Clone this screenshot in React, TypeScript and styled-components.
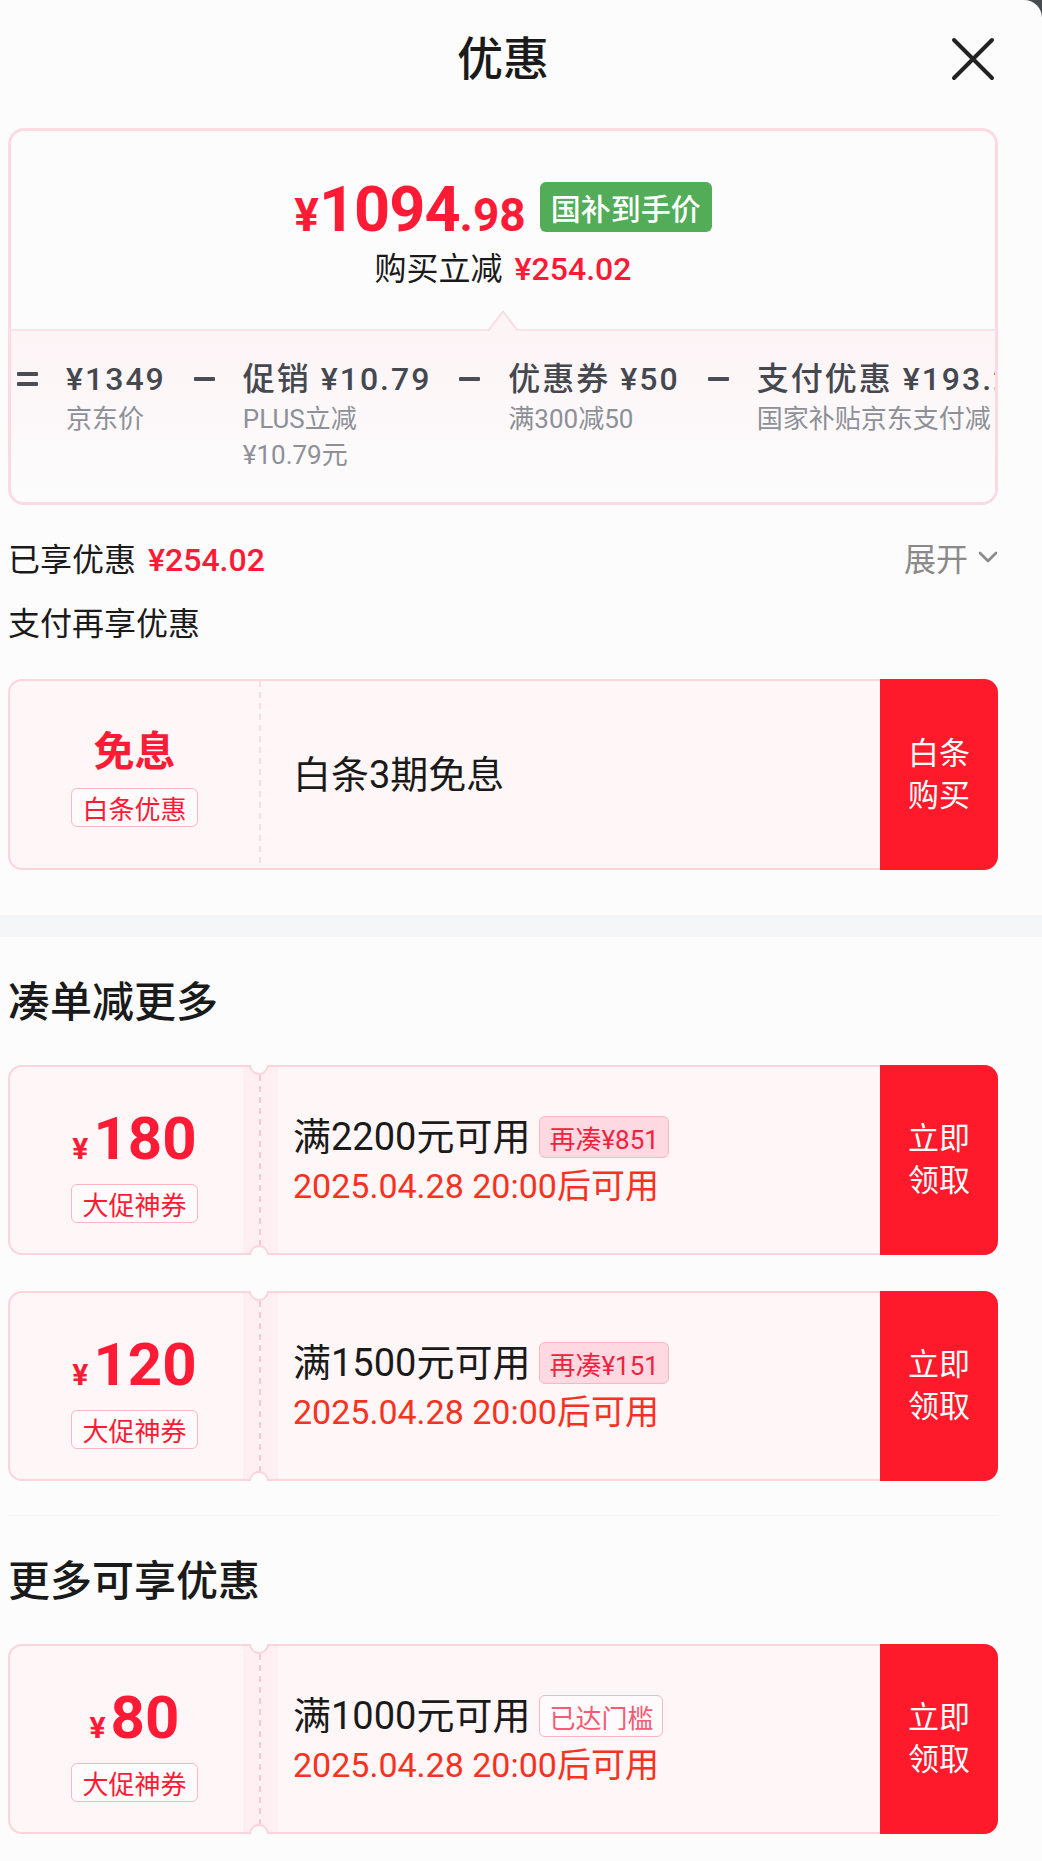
import styled, { createGlobalStyle } from "styled-components";

const GlobalStyle = createGlobalStyle`
  html, body {
    margin: 0;
    padding: 0;
    background: #474c51;
  }
  body {
    font-family: Roboto, "Noto Sans CJK SC", sans-serif;
    color: #1a1a1a;
  }
  * {
    box-sizing: border-box;
  }
`;

const RED = "#ff1a35";

const Sheet = styled.div`
  width: 1042px;
  height: 1861px;
  overflow: hidden;
  background: #fcfcfc;
  border-top-right-radius: 18px;
`;

const Section = styled.div`
  padding: 0 44px 0 8px;
`;

const Header = styled.div`
  height: 118px;
  display: grid;
  grid-template-columns: 1fr auto 1fr;
  align-items: center;
`;

const Title = styled.h1`
  grid-column: 2;
  margin: 0;
  font-size: 46px;
  font-weight: 500;
  line-height: 60px;
`;

const CloseButton = styled.button`
  justify-self: end;
  width: 44px;
  height: 44px;
  margin-right: 3px;
  padding: 0;
  border: 0;
  background: none;
  display: flex;
`;

/* ---------- summary card ---------- */

const SummaryCard = styled.div`
  margin-top: 10px;
  border: 3px solid #fdd9e3;
  border-radius: 16px;
  overflow: hidden;
`;

const SummaryTop = styled.div`
  height: 198px;
  padding-top: 51px;
  display: flex;
  flex-direction: column;
  align-items: center;
`;

const PriceRow = styled.div`
  height: 50px;
  display: flex;
  align-items: flex-end;
`;

const FinalPrice = styled.div`
  display: flex;
  align-items: baseline;
  color: ${RED};
  font-family: Roboto, sans-serif;
  font-weight: 700;
`;

const PricePart = styled.span<{ $big?: boolean }>`
  font-size: ${(p) => (p.$big ? "63px" : "46px")};
  line-height: 0.68;
  letter-spacing: ${(p) => (p.$big ? "-1px" : "0")};
`;

const GreenBadge = styled.div`
  margin-left: 14px;
  height: 50px;
  padding: 0 11px;
  border-radius: 6px;
  background: #52ac58;
  color: #fff;
  font-size: 30px;
  font-weight: 500;
  display: flex;
  align-items: center;
`;

const SaveLine = styled.div`
  margin-top: 17px;
  font-size: 32px;
  line-height: 40px;
`;

const RedAmount = styled.span`
  margin-left: 12px;
  color: ${RED};
  font-weight: 500;
`;

const SummaryBottom = styled.div`
  position: relative;
  border-top: 2px solid #fde4ea;
  background: linear-gradient(180deg, #fdf4f6 0%, #fcfcfc 100%);
  padding: 26px 0 29px 6px;
`;

const Pointer = styled.svg`
  position: absolute;
  top: -21px;
  left: 50%;
  transform: translateX(-50%);
`;

const Breakdown = styled.div`
  display: flex;
  gap: 28px;
  align-items: flex-start;
`;

const Operator = styled.div`
  flex: none;
  height: 44px;
  display: flex;
  flex-direction: column;
  justify-content: center;
  gap: 6px;
`;

const OpBar = styled.span`
  width: 21px;
  height: 4px;
  border-radius: 1px;
  background: #4a4d55;
`;

const BreakItem = styled.div`
  flex: none;
  display: flex;
  flex-direction: column;
`;

const BreakMain = styled.div`
  font-size: 32px;
  line-height: 44px;
  font-weight: 500;
  letter-spacing: 2px;
  color: #45484f;
  white-space: nowrap;
`;

const BreakSub = styled.div`
  width: 0;
  min-width: 100%;
  font-size: 26px;
  line-height: 36px;
  color: #8d9097;
`;

/* ---------- rows ---------- */

const AppliedRow = styled.div`
  margin-top: 28px;
  height: 48px;
  display: flex;
  align-items: center;
  justify-content: space-between;
  font-size: 32px;
`;

const Expand = styled.div`
  display: flex;
  align-items: center;
  gap: 10px;
  color: #8a8a8a;
`;

const PayTitle = styled.div`
  margin-top: 19px;
  font-size: 32px;
  line-height: 48px;
`;

const Band = styled.div`
  margin-top: 45px;
  height: 22px;
  background: #f5f6f8;
`;

const Heading = styled.h2<{ $top: number }>`
  margin: ${(p) => p.$top}px 0 0;
  font-size: 42px;
  font-weight: 500;
  line-height: 60px;
`;

const TicketList = styled.div`
  margin-top: 32px;
  display: flex;
  flex-direction: column;
  gap: 36px;
`;

const FaintLine = styled.div`
  margin-top: 34px;
  height: 1px;
  background: #f5f6f9;
`;

/* ---------- tickets ---------- */

const Ticket = styled.div<{ $top?: number }>`
  position: relative;
  margin-top: ${(p) => p.$top ?? 0}px;
  height: ${(p) => (p.$top ? 191 : 190)}px;
  display: flex;
  border: 2px solid #fdd3dc;
  border-radius: 14px;
  background: #fff6f7;
`;

const TicketLeft = styled.div<{ $notched?: boolean }>`
  flex: none;
  width: 249px;
  display: flex;
  flex-direction: column;
  align-items: center;
  justify-content: center;
  padding-top: ${(p) => (p.$notched ? 11 : 4)}px;
  border-radius: 12px 0 0 12px;
  background: ${(p) =>
    p.$notched
      ? "linear-gradient(90deg, transparent calc(100% - 16px), #fdeff2 calc(100% - 16px))"
      : "transparent"};
`;

const Dashes = styled.div<{ $notched?: boolean }>`
  flex: none;
  width: 2px;
  margin: ${(p) => (p.$notched ? "8px 0" : "0")};
  background: repeating-linear-gradient(
    180deg,
    ${(p) => (p.$notched ? "#fac6d2" : "#fcdce3")} 0 6px,
    transparent 6px 11px
  );
`;

const TicketMiddle = styled.div<{ $notched?: boolean }>`
  flex: 1;
  min-width: 0;
  padding-left: 32px;
  display: flex;
  flex-direction: column;
  justify-content: center;
  background: ${(p) =>
    p.$notched
      ? "linear-gradient(90deg, #fdeff2 17px, transparent 17px)"
      : "transparent"};
`;

const ActionButton = styled.button`
  flex: none;
  width: 118px;
  margin: -2px -2px -2px 0;
  border: 0;
  border-radius: 0 14px 14px 0;
  background: #ff1a2b;
  color: #fff;
  font-family: inherit;
  font-size: 31px;
  line-height: 42px;
  display: flex;
  flex-direction: column;
  align-items: center;
  justify-content: center;
`;

const Notch = styled.span<{ $side: "top" | "bottom" }>`
  position: absolute;
  left: 239px;
  ${(p) => (p.$side === "top" ? "top: -12px;" : "bottom: -12px;")}
  width: 20px;
  height: 20px;
  border-radius: 50%;
  background: #fcfcfc;
  border: 2px solid transparent;
  ${(p) =>
    p.$side === "top"
      ? "border-bottom-color: #fdd3dc; border-left-color: #fdd3dc; transform: rotate(-45deg);"
      : "border-top-color: #fdd3dc; border-left-color: #fdd3dc; transform: rotate(45deg);"}
`;

const BigWord = styled.div`
  color: ${RED};
  font-size: 41px;
  font-weight: 700;
  line-height: 50px;
`;

const Amount = styled.div`
  display: flex;
  align-items: baseline;
  color: ${RED};
  font-family: Roboto, sans-serif;
  font-weight: 700;
`;

const AmountYen = styled.span`
  margin-right: 5px;
  font-size: 30px;
`;

const AmountNum = styled.span`
  font-size: 60px;
  line-height: 60px;
`;

const LeftTag = styled.div<{ $gap: number }>`
  margin-top: ${(p) => p.$gap}px;
  height: 39px;
  padding: 0 10px;
  border: 1px solid #fcb7c4;
  border-radius: 6px;
  background: #fffafb;
  color: ${RED};
  font-size: 26px;
  display: flex;
  align-items: center;
`;

const PlainText = styled.div`
  font-size: 38px;
  line-height: 48px;
`;

const CondRow = styled.div`
  display: flex;
  align-items: center;
  gap: 9px;
  height: 52px;
`;

const Cond = styled.span`
  font-size: 38px;
  line-height: 52px;
`;

const CondTag = styled.span<{ $kind: "fill" | "outline" }>`
  height: 42px;
  padding: 0 9px;
  border: 1px solid #fbb5c3;
  border-radius: 6px;
  background: ${(p) => (p.$kind === "fill" ? "#ffd9e1" : "#fffafb")};
  color: ${(p) => (p.$kind === "fill" ? "#f0233e" : "#f45c74")};
  font-size: 26px;
  display: flex;
  align-items: center;
`;

const DateLine = styled.div`
  font-size: 34px;
  line-height: 46px;
  color: #f7321f;
`;

type Coupon = {
  amount: string;
  cond: string;
  tag: string;
  kind: "fill" | "outline";
  date: string;
};

const breakdown = [
  { main: "¥1349", sub: "京东价" },
  { main: "促销 ¥10.79", sub: "PLUS立减¥10.79元" },
  { main: "优惠券 ¥50", sub: "满300减50" },
  { main: "支付优惠 ¥193.23", sub: "国家补贴京东支付减" },
];

const addOnCoupons: Coupon[] = [
  { amount: "180", cond: "满2200元可用", tag: "再凑¥851", kind: "fill", date: "2025.04.28 20:00后可用" },
  { amount: "120", cond: "满1500元可用", tag: "再凑¥151", kind: "fill", date: "2025.04.28 20:00后可用" },
];

const moreCoupons: Coupon[] = [
  { amount: "80", cond: "满1000元可用", tag: "已达门槛", kind: "outline", date: "2025.04.28 20:00后可用" },
];

const CouponTicket = ({ coupon }: { coupon: Coupon }) => (
  <Ticket>
    <Notch $side="top" />
    <Notch $side="bottom" />
    <TicketLeft $notched>
      <Amount>
        <AmountYen>¥</AmountYen>
        <AmountNum>{coupon.amount}</AmountNum>
      </Amount>
      <LeftTag $gap={15}>大促神券</LeftTag>
    </TicketLeft>
    <Dashes $notched />
    <TicketMiddle $notched>
      <CondRow>
        <Cond>{coupon.cond}</Cond>
        <CondTag $kind={coupon.kind}>{coupon.tag}</CondTag>
      </CondRow>
      <DateLine>{coupon.date}</DateLine>
    </TicketMiddle>
    <ActionButton>
      <span>立即</span>
      <span>领取</span>
    </ActionButton>
  </Ticket>
);

export default function App() {
  return (
    <>
      <GlobalStyle />
      <Sheet>
        <Section>
          <Header>
            <Title>优惠</Title>
            <CloseButton aria-label="关闭">
              <svg width="44" height="44" viewBox="0 0 44 44">
                <path
                  d="M3 3 L41 41 M41 3 L3 41"
                  stroke="#222"
                  strokeWidth="4"
                  strokeLinecap="round"
                  fill="none"
                />
              </svg>
            </CloseButton>
          </Header>

          <SummaryCard>
            <SummaryTop>
              <PriceRow>
                <FinalPrice>
                  <PricePart>¥</PricePart>
                  <PricePart $big>1094</PricePart>
                  <PricePart>.98</PricePart>
                </FinalPrice>
                <GreenBadge>国补到手价</GreenBadge>
              </PriceRow>
              <SaveLine>
                购买立减<RedAmount>¥254.02</RedAmount>
              </SaveLine>
            </SummaryTop>
            <SummaryBottom>
              <Pointer width="32" height="23" viewBox="0 0 32 23">
                <path d="M1 23 L1 21 L16 1.5 L31 21 L31 23 Z" fill="#fdf4f6" />
                <path d="M1 21 L16 1.5 L31 21" stroke="#fcdce5" strokeWidth="2" fill="none" />
              </Pointer>
              <Breakdown>
                <Operator>
                  <OpBar />
                  <OpBar />
                </Operator>
                {breakdown.map((item, i) => (
                  <>
                    {i > 0 && (
                      <Operator key={`op${i}`}>
                        <OpBar />
                      </Operator>
                    )}
                    <BreakItem key={`item${i}`}>
                      <BreakMain>{item.main}</BreakMain>
                      <BreakSub>{item.sub}</BreakSub>
                    </BreakItem>
                  </>
                ))}
              </Breakdown>
            </SummaryBottom>
          </SummaryCard>

          <AppliedRow>
            <span>
              已享优惠<RedAmount>¥254.02</RedAmount>
            </span>
            <Expand>
              展开
              <svg width="20" height="12" viewBox="0 0 20 12">
                <path
                  d="M2 2 L10 10 L18 2"
                  stroke="#8a8a8a"
                  strokeWidth="2.6"
                  strokeLinecap="round"
                  strokeLinejoin="round"
                  fill="none"
                />
              </svg>
            </Expand>
          </AppliedRow>

          <PayTitle>支付再享优惠</PayTitle>

          <Ticket $top={31}>
            <TicketLeft>
              <BigWord>免息</BigWord>
              <LeftTag $gap={11}>白条优惠</LeftTag>
            </TicketLeft>
            <Dashes />
            <TicketMiddle>
              <PlainText>白条3期免息</PlainText>
            </TicketMiddle>
            <ActionButton>
              <span>白条</span>
              <span>购买</span>
            </ActionButton>
          </Ticket>
        </Section>

        <Band />

        <Section>
          <Heading $top={36}>凑单减更多</Heading>
          <TicketList>
            {addOnCoupons.map((c) => (
              <CouponTicket key={c.amount} coupon={c} />
            ))}
          </TicketList>
          <FaintLine />
          <Heading $top={36}>更多可享优惠</Heading>
          <TicketList>
            {moreCoupons.map((c) => (
              <CouponTicket key={c.amount} coupon={c} />
            ))}
          </TicketList>
        </Section>
      </Sheet>
    </>
  );
}
